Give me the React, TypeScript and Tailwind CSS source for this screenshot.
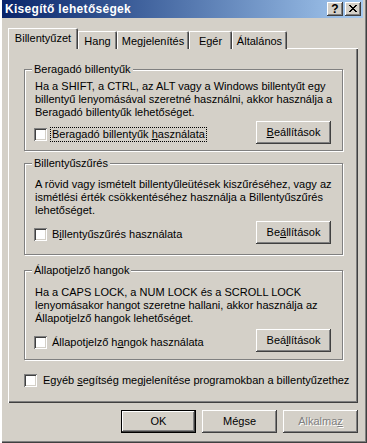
import React from "react";

const raised =
  "shadow-[inset_-1px_-1px_0_#404040,inset_1px_1px_0_#ffffff,inset_-2px_-2px_0_#808080,inset_2px_2px_0_#D4D0C8]";

function Check() {
  return (
    <span className="block w-[13px] h-[13px] shrink-0 bg-white shadow-[inset_1px_1px_0_#808080,inset_-1px_-1px_0_#ffffff,inset_2px_2px_0_#404040,inset_-2px_-2px_0_#D4D0C8]" />
  );
}

function Btn({ children, def }: { children: React.ReactNode; def?: boolean }) {
  if (def) {
    return (
      <div className="w-[75px] h-[23px] border border-black">
        <div className={`w-full h-full flex items-center justify-center ${raised}`}>{children}</div>
      </div>
    );
  }
  return <div className={`w-[75px] h-[23px] flex items-center justify-center ${raised}`}>{children}</div>;
}

function Group({
  label,
  lines,
  check,
  btn,
  focus,
  pt,
  rowMt,
  pb,
}: {
  label: string;
  lines: React.ReactNode[];
  check: React.ReactNode;
  btn: React.ReactNode;
  focus?: boolean;
  pt: string;
  rowMt: string;
  pb: string;
}) {
  return (
    <div className="relative w-[319px] border border-[#808080] shadow-[inset_1px_1px_0_#ffffff,1px_1px_0_#ffffff]">
      <span className="absolute top-[-7px] left-[7px] px-[2px] bg-[#D4D0C8] leading-[13px]">{label}</span>
      <div className={`pl-[10px] ${pt} ${pb}`}>
        <div className="leading-[13px]">
          {lines.map((l, i) => (
            <div key={i} className="whitespace-nowrap">{l}</div>
          ))}
        </div>
        <div className={`flex items-start justify-between pr-[11px] ${rowMt}`}>
          <div className="flex items-center mt-[6px] ml-[-1px]">
            <Check />
            <span
              className={`ml-[3px] px-[1px] leading-[13px] border ${
                focus ? "border-dotted border-black" : "border-transparent"
              }`}
            >
              {check}
            </span>
          </div>
          <Btn>{btn}</Btn>
        </div>
      </div>
    </div>
  );
}

function Tab({ children, sel, w }: { children: React.ReactNode; sel?: boolean; w: string }) {
  if (sel) {
    return (
      <div
        className={`${w} h-[21px] bg-[#D4D0C8] rounded-tr-[2px] shadow-[inset_1px_1px_0_#ffffff,inset_-1px_0_0_#404040,inset_-2px_0_0_#808080] flex justify-center pt-[4px] leading-[13px]`}
      >
        {children}
      </div>
    );
  }
  return (
    <div
      className={`${w} h-[18px] bg-[#D4D0C8] rounded-tr-[2px] shadow-[inset_1px_1px_0_#ffffff,inset_-1px_0_0_#404040,inset_-2px_0_0_#808080] flex justify-center pt-[4px] leading-[13px]`}
    >
      {children}
    </div>
  );
}

export default function App() {
  return (
    <div className="w-[367px] h-[443px] bg-[#D4D0C8] text-[11px] text-black font-['Liberation_Sans',Arial,sans-serif] shadow-[inset_2px_0_0_#ffffff,inset_1px_0_0_#D4D0C8,inset_-1px_-1px_0_#404040,inset_-2px_-2px_0_#808080] overflow-hidden">
      {/* title bar */}
      <div className="ml-[2px] mr-[4px] h-[18px] bg-gradient-to-r from-[#0A246A] to-[#A6CAF0] flex items-center justify-between">
        <span className="ml-[3px] text-white font-bold text-[12px] tracking-[0.3px] leading-[13px]">Kisegítő lehetőségek</span>
        <div className="flex mr-[2px] gap-[2px]">
          <div className={`w-[16px] h-[14px] bg-[#D4D0C8] flex items-center justify-center ${raised}`}>
            <span className="font-bold text-[12px] leading-[12px] mt-[-1px]">?</span>
          </div>
          <div className={`w-[16px] h-[14px] bg-[#D4D0C8] flex items-center justify-center ${raised}`}>
            <svg width="8" height="7" viewBox="0 0 8 7" shapeRendering="crispEdges" className="mt-[-1px]">
              <rect x="0" y="0" width="2" height="1" fill="#000" />
              <rect x="6" y="0" width="2" height="1" fill="#000" />
              <rect x="1" y="1" width="2" height="1" fill="#000" />
              <rect x="5" y="1" width="2" height="1" fill="#000" />
              <rect x="2" y="2" width="4" height="1" fill="#000" />
              <rect x="3" y="3" width="2" height="1" fill="#000" />
              <rect x="2" y="4" width="4" height="1" fill="#000" />
              <rect x="1" y="5" width="2" height="1" fill="#000" />
              <rect x="5" y="5" width="2" height="1" fill="#000" />
              <rect x="0" y="6" width="2" height="1" fill="#000" />
              <rect x="6" y="6" width="2" height="1" fill="#000" />
            </svg>
          </div>
        </div>
      </div>

      {/* tabs */}
      <div className="relative z-10 mt-[10px] ml-[8px] flex items-end h-[21px]">
        <Tab sel w="w-[70px]">Billentyűzet</Tab>
        <Tab w="w-[39px]">Hang</Tab>
        <Tab w="w-[72px]">Megjelenítés</Tab>
        <Tab w="w-[43px]">Egér</Tab>
        <Tab w="w-[55px]">Általános</Tab>
      </div>

      {/* panel */}
      <div className="relative mt-[-1px] ml-[8px] w-[350px] h-[355px] shadow-[inset_1px_1px_0_#ffffff,inset_-1px_-1px_0_#404040,inset_-2px_-2px_0_#808080] pl-[16px] pt-[21px]">
        <Group
          label="Beragadó billentyűk"
          lines={[
            "Ha a SHIFT, a CTRL, az ALT vagy a Windows billentyűt egy",
            "billentyű lenyomásával szeretné használni, akkor használja a",
            "Beragadó billentyűk lehetőséget.",
          ]}
          check={
            <>
              Beragadó billentyűk <u>h</u>asználata
            </>
          }
          btn={
            <>
              <u>B</u>eállítások
            </>
          }
          focus
          pt="pt-[10px]"
          rowMt="mt-[2px]"
          pb="pb-[6px]"
        />
        <div className="h-[12px]" />
        <Group
          label="Billentyűszűrés"
          lines={[
            "A rövid vagy ismételt billentyűleütések kiszűréséhez, vagy az",
            "ismétlési érték csökkentéséhez használja a Billentyűszűrés",
            "lehetőséget.",
          ]}
          check={
            <>
              B<u>i</u>llentyűszűrés használata
            </>
          }
          btn={
            <>
              Be<u>á</u>llítások
            </>
          }
          pt="pt-[14px]"
          rowMt="mt-[4px]"
          pb="pb-[10px]"
        />
        <div className="h-[15px]" />
        <Group
          label="Állapotjelző hangok"
          lines={[
            "Ha a CAPS LOCK, a NUM LOCK és a SCROLL LOCK",
            "lenyomásakor hangot szeretne hallani, akkor használja az",
            "Állapotjelző hangok lehetőséget.",
          ]}
          check={
            <>
              Állapotjelző h<u>a</u>ngok használata
            </>
          }
          btn={
            <>
              Beá<u>l</u>lítások
            </>
          }
          pt="pt-[15px]"
          rowMt="mt-[4px]"
          pb="pb-[7px]"
        />
        <div className="flex items-center mt-[14px]">
          <Check />
          <span className="ml-[6px] leading-[13px]">
            Egyéb <u>s</u>egítség megjelenítése programokban a billentyűzethez
          </span>
        </div>
      </div>

      {/* buttons */}
      <div className="mt-[7px] w-[358px] flex justify-end gap-[6px]">
        <Btn def>OK</Btn>
        <Btn>Mégse</Btn>
        <Btn>
          <span className="text-[#808080] [text-shadow:1px_1px_0_#ffffff]">
            Alkalma<u>z</u>
          </span>
        </Btn>
      </div>
    </div>
  );
}
